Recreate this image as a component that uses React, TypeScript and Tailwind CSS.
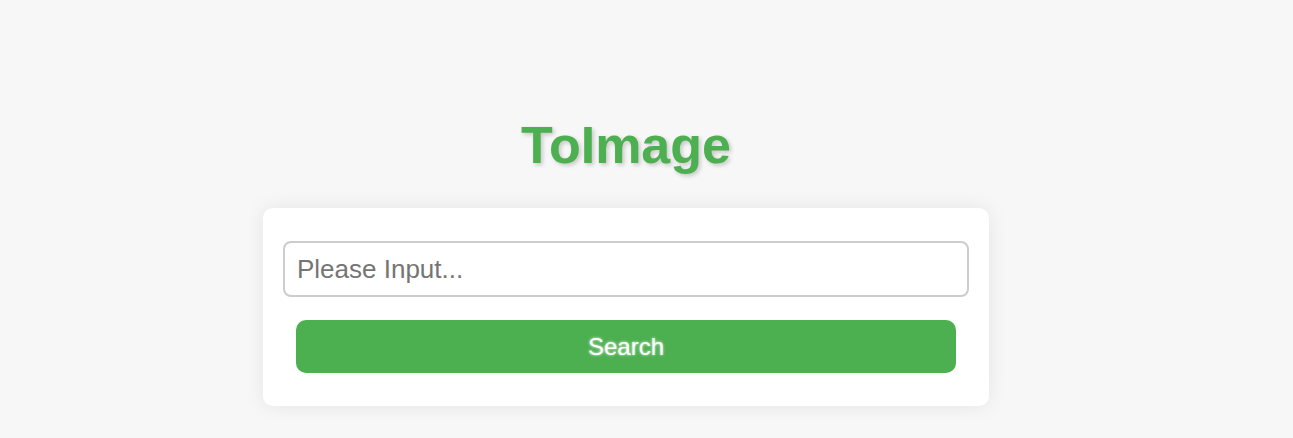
export default function App() {
  return (
    <div className="min-h-screen w-full bg-[#f7f7f7] pr-[41px] pt-[117px] font-['Liberation_Sans',Arial,sans-serif]">
      <div className="flex flex-col items-center">
        <h1 className="text-[52px] font-bold leading-[57px] text-[#4caf50] [text-shadow:2px_2px_4px_rgba(0,0,0,0.2)]">
          ToImage
        </h1>
        <div className="mt-[34px] w-[726px] rounded-[10px] bg-white px-5 pb-[33px] pt-[33px] shadow-[0_0_20px_rgba(0,0,0,0.08)]">
          <input
            type="text"
            placeholder="Please Input..."
            className="box-border h-[56px] w-full rounded-[8px] border-2 border-[#ccc] bg-white px-3 text-[26px] text-[#333] outline-none placeholder:text-[#757575]"
          />
          <div className="px-[13px] pt-[23px]">
            <button className="h-[53px] w-full rounded-[10px] bg-[#4caf50] text-[24px] text-white [text-shadow:0_0_3px_rgba(255,255,255,0.9)]">
              Search
            </button>
          </div>
        </div>
      </div>
    </div>
  );
}
